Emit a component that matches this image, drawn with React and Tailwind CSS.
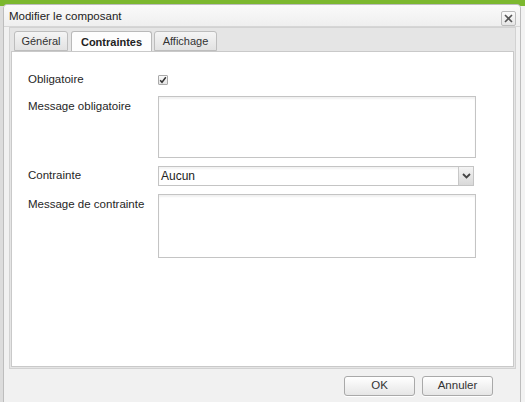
import React from "react";

const font = { fontFamily: '"Liberation Sans", Arial, sans-serif' };

function Tab({ label, active, w }) {
  return (
    <div
      className={
        active
          ? "h-[21px] -mb-px flex items-center justify-center border border-[#b9b9b9] border-b-0 rounded-t-[3px] bg-[#fdfdfd] text-[11px] font-bold text-[#222]"
          : "h-[20px] flex items-center justify-center border border-[#bdbdbd] rounded-t-[3px] bg-gradient-to-b from-[#f5f5f5] to-[#e2e2e2] text-[11px] text-[#333]"
      }
      style={{ width: w }}
    >
      {label}
    </div>
  );
}

function Textarea({ h }) {
  return (
    <div
      className="w-[318px] border border-[#c4c4c4] bg-white shadow-[inset_0_2px_2px_rgba(0,0,0,0.06)]"
      style={{ height: h }}
    />
  );
}

export default function App() {
  return (
    <div className="w-[525px] h-[402px] relative overflow-hidden bg-[#f3f3f3]" style={font}>
      <div className="h-[6px] bg-[#7cb82f]" />
      <div className="absolute left-0 top-[6px] w-[3px] h-[396px] bg-[#dcdcdc]" />
      {/* dialog */}
      <div className="absolute left-[3px] top-[4px] w-[518px] h-[400px] border border-[#bdbdbd] rounded-t-[4px] bg-[#f1f1f1] flex flex-col">
        {/* title bar */}
        <div className="h-[21px] flex items-center justify-between pl-[5px] pr-[4px] rounded-t-[4px] bg-gradient-to-b from-[#fafafa] to-[#efefef]">
          <span className="text-[11.5px] text-[#222] pt-[2px]">Modifier le composant</span>
          <div className="w-[15px] h-[15px] mt-[6px] border border-[#bcbcbc] rounded-[2px] bg-gradient-to-b from-[#fbfbfb] to-[#e6e6e6] flex items-center justify-center">
            <svg width="9" height="9" viewBox="0 0 9 9">
              <path d="M1 1 L8 8 M8 1 L1 8" stroke="#555" strokeWidth="1.6" />
            </svg>
          </div>
        </div>
        <div className="h-px bg-[#d6d6d6]" />
        {/* panel */}
        <div className="ml-[5px] mr-[4px] border border-[#d2d2d2] bg-[#e5e5e5] flex flex-col">
          <div className="h-[23px] flex items-end pl-[4px]">
            <Tab label="Général" w={54} />
            <div className="w-[3px]" />
            <Tab label="Contraintes" active w={81} />
            <div className="w-[2px]" />
            <Tab label="Affichage" w={63} />
          </div>
          <div className="mx-[1px] mb-[1px] border border-[#c9c9c9] bg-white h-[316px] pt-[18px] pl-[16px] flex flex-col gap-[6px] text-[11.5px] text-[#262626]">
            <div className="h-[20px] flex items-center">
              <div className="w-[130px]">Obligatoire</div>
              <div className="w-[10px] h-[10px] border border-[#a9a9a9] rounded-[1px] bg-gradient-to-b from-[#fafafa] to-[#e4e4e4] flex items-center justify-center">
                <svg width="8" height="8" viewBox="0 0 8 8">
                  <path d="M1.2 4.2 L3 6.2 L6.8 1.2" fill="none" stroke="#333" strokeWidth="1.5" />
                </svg>
              </div>
            </div>
            <div className="flex">
              <div className="w-[130px] pt-[2px]">Message obligatoire</div>
              <Textarea h={62} />
            </div>
            <div className="flex items-center mt-[2px]">
              <div className="w-[130px]">Contrainte</div>
              <div className="w-[316px] h-[20px] border border-[#c4c4c4] bg-white flex items-center shadow-[inset_0_2px_2px_rgba(0,0,0,0.05)]">
                <span className="flex-1 pl-[2px] text-[12px] text-[#222]">Aucun</span>
                <div className="w-[15px] h-full border-l border-[#c8c8c8] bg-gradient-to-b from-[#f4f4f4] to-[#d9d9d9] flex items-center justify-center">
                  <svg width="9" height="6" viewBox="0 0 9 6">
                    <path d="M1 1 L4.5 4.5 L8 1" fill="none" stroke="#444" strokeWidth="1.8" />
                  </svg>
                </div>
              </div>
            </div>
            <div className="flex mt-[2px]">
              <div className="w-[130px] pt-[2px]">Message de contrainte</div>
              <Textarea h={64} />
            </div>
          </div>
        </div>
        {/* footer */}
        <div className="flex justify-end gap-[7px] pr-[27px] pt-[7px]">
          <button className="w-[71px] h-[20px] border border-[#a9a9a9] rounded-[3px] bg-gradient-to-b from-[#ffffff] to-[#e6e6e6] text-[11.5px] text-[#333] shadow-[0_1px_0_#fff]">
            OK
          </button>
          <button className="w-[71px] h-[20px] border border-[#a9a9a9] rounded-[3px] bg-gradient-to-b from-[#ffffff] to-[#e6e6e6] text-[11.5px] text-[#333] shadow-[0_1px_0_#fff]">
            Annuler
          </button>
        </div>
      </div>
    </div>
  );
}
